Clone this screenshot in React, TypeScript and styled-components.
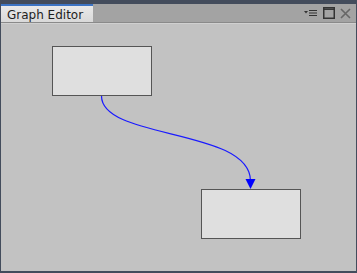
import React from "react"
import styled, { createGlobalStyle } from "styled-components"

const Global = createGlobalStyle`
    html, body {
        margin: 0;
        padding: 0;
        background: #434c5c;
    }
`

const Window = styled.div`
    width: 357px;
    height: 273px;
    box-sizing: border-box;
    padding: 4px 1px 2px 1px;
    background: #434c5c;
    display: flex;
    flex-direction: column;
    font-family: "DejaVu Sans", Verdana, sans-serif;
`

const TabBar = styled.div`
    height: 18px;
    display: flex;
    align-items: stretch;
    background: #a3a3a3;
    border-bottom: 1px solid #8a8a8a;
`

const Tab = styled.div`
    width: 92px;
    box-sizing: border-box;
    border-top: 2px solid #3d74c4;
    background: linear-gradient(#e9e9e9, #d9d9d9);
    padding: 2px 0 0 6px;
    font-size: 12px;
    color: #1e1e1e;
    line-height: 14px;
`

const Spacer = styled.span`
    flex: 1;
`

const Controls = styled.div`
    display: flex;
    align-items: center;
    gap: 5px;
    padding-right: 5px;
`

const Canvas = styled.div`
    flex: 1;
    position: relative;
    background: #c2c2c2;
    border-top: 1px solid #d0d0d0;
`

const Node = styled.div<{ $x: number; $y: number }>`
    position: absolute;
    left: ${p => p.$x}px;
    top: ${p => p.$y}px;
    width: 100px;
    height: 50px;
    box-sizing: border-box;
    background: #dfdfdf;
    border: 1px solid #555555;
`

const Wires = styled.svg`
    position: absolute;
    left: 0;
    top: 0;
`

export default function App() {
    // canvas content origin sits at (1, 24) on the page
    const ox = 1
    const oy = 24
    return (
        <Window>
            <Global />
            <TabBar>
                <Tab>Graph Editor</Tab>
                <Spacer />
                <Controls>
                    <svg width="14" height="10" viewBox="0 0 14 10">
                        <path d="M0 3 L4 3 L2 5.5 Z" fill="#333" />
                        <path d="M5 2.5 H13 M5 5 H13 M5 7.5 H13" stroke="#333" strokeWidth="1.2" />
                    </svg>
                    <svg width="12" height="12" viewBox="0 0 12 12">
                        <rect x="0.75" y="0.75" width="10.5" height="10.5" fill="none" stroke="#333" strokeWidth="1.5" />
                        <path d="M0.75 2.2 H11.25" stroke="#333" strokeWidth="1.5" />
                    </svg>
                    <svg width="11" height="11" viewBox="0 0 11 11">
                        <path d="M1 1 L10 10 M10 1 L1 10" stroke="#666" strokeWidth="1.6" />
                    </svg>
                </Controls>
            </TabBar>
            <Canvas>
                <Node $x={52 - ox} $y={46 - oy} />
                <Node $x={201 - ox} $y={189 - oy} />
                <Wires width="355" height="248">
                    <path
                        d={`M${101.5 - ox} ${96 - oy} C${101.5 - ox} ${140 - oy} ${250.5 - ox} ${128 - oy} ${250.5 - ox} ${181 - oy}`}
                        fill="none"
                        stroke="#1a1aff"
                        strokeWidth="1.2"
                    />
                    <path
                        d={`M${245.5 - ox} ${179 - oy} L${255.5 - ox} ${179 - oy} L${250.5 - ox} ${189 - oy} Z`}
                        fill="#0000ff"
                    />
                </Wires>
            </Canvas>
        </Window>
    )
}
